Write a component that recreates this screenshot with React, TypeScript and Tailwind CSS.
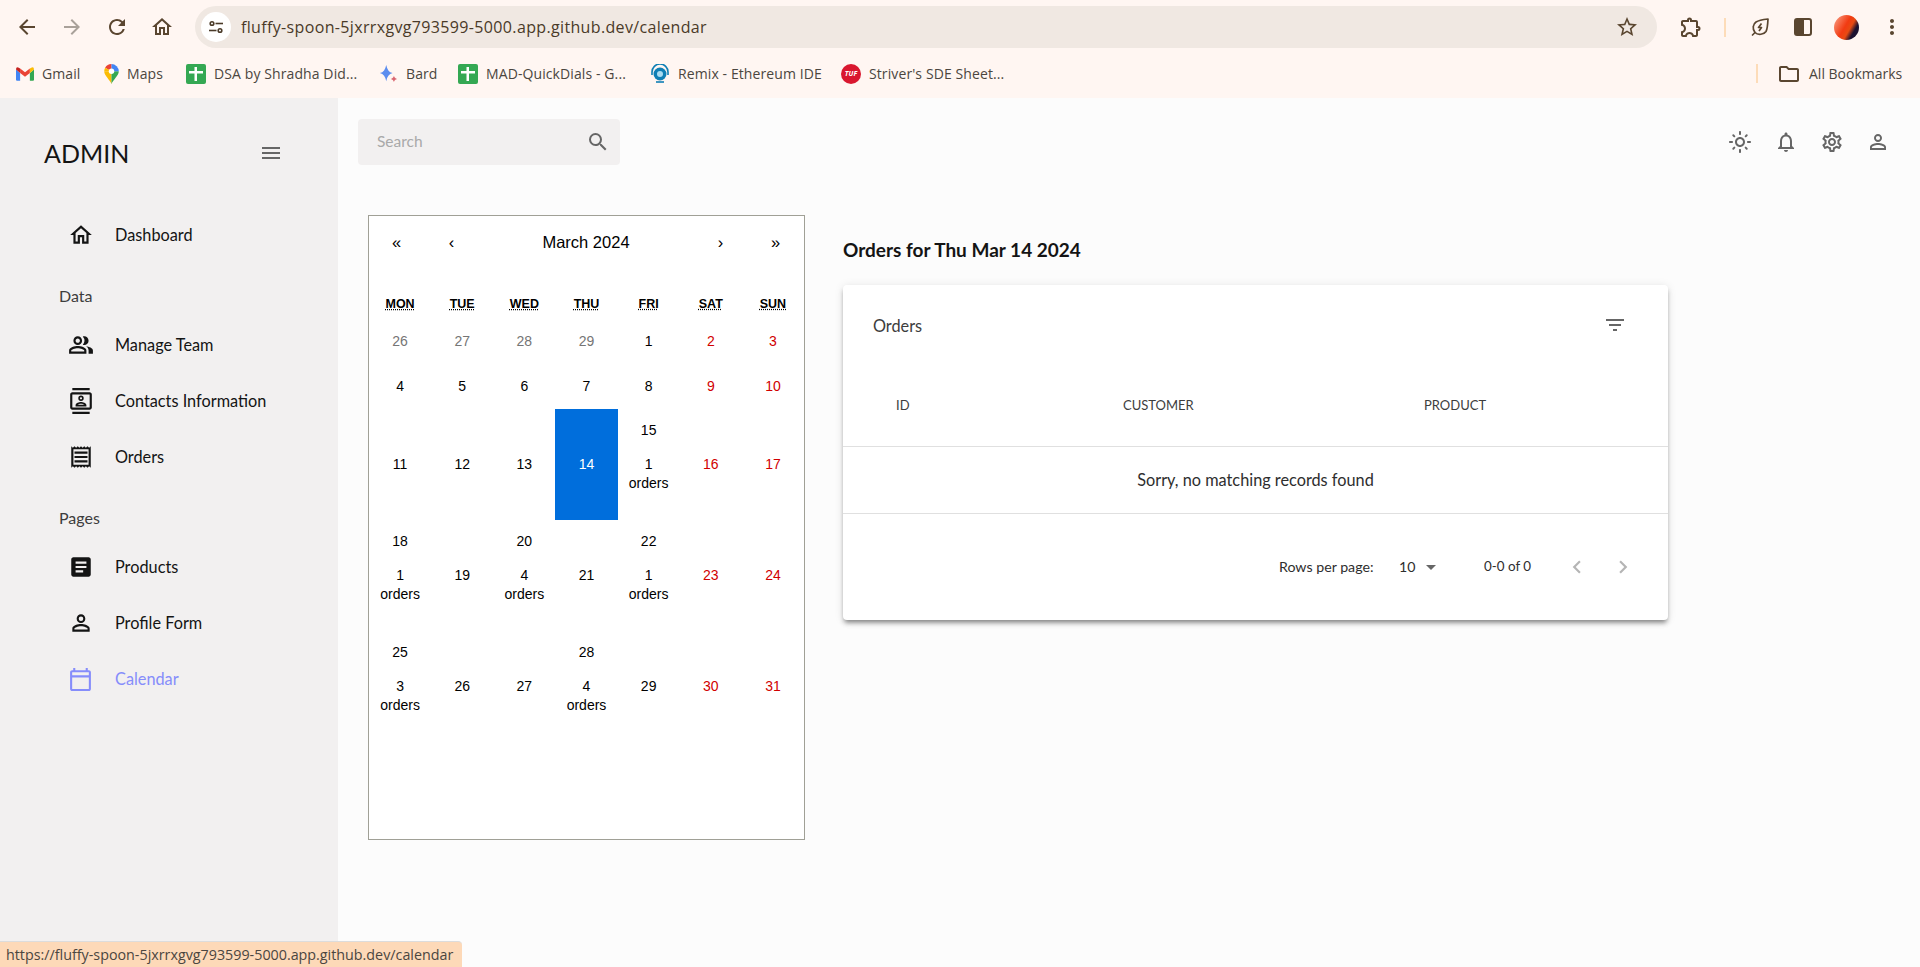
import {
  MdArrowBack,
  MdArrowDropDown,
  MdArrowForward,
  MdArticle,
  MdChevronLeft,
  MdChevronRight,
  MdFilterList,
  MdMenu,
  MdMoreVert,
  MdNotificationsNone,
  MdOutlineCalendarToday,
  MdOutlineContacts,
  MdOutlineExtension,
  MdOutlineFolder,
  MdOutlineHome,
  MdOutlineLightMode,
  MdOutlinePeopleAlt,
  MdOutlineReceipt,
  MdOutlineSettings,
  MdPersonOutline,
  MdRefresh,
  MdSearch,
  MdStarBorder,
} from "react-icons/md";
import type { ReactNode } from "react";

const GmailIcon = () => (
  <svg viewBox="0 0 24 18" className="w-[18px] h-[14px]">
    <path d="M0 3 L0 16.5 Q0 18 1.5 18 L5.5 18 L5.5 7.5 Z" fill="#4285f4" />
    <path d="M24 3 L24 16.5 Q24 18 22.5 18 L18.5 18 L18.5 7.5 Z" fill="#34a853" />
    <path d="M5.5 7.5 L12 12.5 L18.5 7.5 L18.5 1.5 L12 6.5 L5.5 1.5 Z" fill="#ea4335" />
    <path d="M0 3 Q0 -0.5 3 0.3 L5.5 1.5 L5.5 7.5 Z" fill="#c5221f" />
    <path d="M24 3 Q24 -0.5 21 0.3 L18.5 1.5 L18.5 7.5 Z" fill="#fbbc04" />
  </svg>
);

const MapsIcon = () => (
  <svg viewBox="0 0 16 22" className="w-[15px] h-[20px]">
    <path d="M8 22 C6 17 0 13 0 8 L8 8 Z" fill="#fbbc04" />
    <path d="M8 22 C10 17 16 13 16 8 L8 8 Z" fill="#34a853" />
    <path d="M1 4 A8 8 0 0 1 8 0 L8 8 Z" fill="#ea4335" />
    <path d="M8 0 A8 8 0 0 1 16 8 L8 8 Z" fill="#4285f4" />
    <path d="M0 8 A8 8 0 0 1 1 4 L8 8 Z" fill="#fbbc04" />
    <circle cx="8" cy="8" r="3" fill="#fff" />
  </svg>
);

const SheetIcon = () => (
  <svg viewBox="0 0 20 20" className="w-5 h-5">
    <rect width="20" height="20" rx="2" fill="#34a853" />
    <rect x="3" y="7" width="14" height="2.5" fill="#fff" />
    <rect x="8.5" y="3" width="2.5" height="14" fill="#fff" />
  </svg>
);

const BardIcon = () => (
  <svg viewBox="0 0 21 21" className="w-[19px] h-[19px]">
    <path d="M8 1 C9 6 11 9 15 10 C11 11 9 14 8 19 C7 14 5 11 1 10 C5 9 7 6 8 1 Z" fill="#5b8def" />
    <path d="M16.5 13 C17 15 18 16 20 16.5 C18 17 17 18 16.5 20 C16 18 15 17 13 16.5 C15 16 16 15 16.5 13 Z" fill="#d96570" />
  </svg>
);

const RemixIcon = () => (
  <svg viewBox="0 0 20 20" className="w-5 h-5">
    <circle cx="10" cy="10" r="6.5" fill="#0f7fb5" />
    <path d="M2 11 V8 A8 8 0 0 1 18 8 V11" fill="none" stroke="#0f7fb5" strokeWidth="1.6" />
    <path d="M6 18 H14" stroke="#0f7fb5" strokeWidth="1.6" />
    <circle cx="10" cy="10" r="3" fill="#a9dcf2" />
  </svg>
);

const TufIcon = () => (
  <span className="flex items-center justify-center w-5 h-5 rounded-full bg-[#d9172f] text-white text-[7px] font-bold italic leading-none">
    TUF
  </span>
);

const LeafIcon = () => (
  <svg viewBox="0 0 20 20" className="w-5 h-5" fill="none" stroke="#5a4630" strokeWidth="1.7">
    <path d="M18 2 C18 2 17.5 12 16 14.5 C14 17.5 8 18.5 5 15.5 C2 12 3 7 6 5 C9 3 18 2 18 2 Z" strokeLinejoin="round" />
    <path d="M11.5 6.5 L8.5 10.5 L11.5 10.5 L9 14" strokeLinejoin="round" />
    <path d="M5 15.5 L2.5 18" strokeLinecap="round" />
  </svg>
);

const SidePanelIcon = () => (
  <svg viewBox="0 0 18 18" className="w-[18px] h-[18px]">
    <rect x="1" y="1" width="16" height="16" rx="2" fill="none" stroke="#5a4630" strokeWidth="2" />
    <rect x="1" y="1" width="9" height="16" fill="#5a4630" />
  </svg>
);

const TuneIcon = () => (
  <svg viewBox="0 0 16 16" className="w-4 h-4" fill="none" stroke="#4a3a28" strokeWidth="1.6">
    <circle cx="4" cy="4.5" r="1.8" />
    <path d="M7.5 4.5 H15" />
    <circle cx="12" cy="11.5" r="1.8" />
    <path d="M1 11.5 H8.5" />
  </svg>
);

type BookmarkProps = { icon: ReactNode; label: string; width: string };

const Bookmark = ({ icon, label, width }: BookmarkProps) => (
  <div className={`flex items-center gap-[8px] shrink-0 ${width}`}>
    <span className="flex items-center justify-center shrink-0">{icon}</span>
    <span className="text-[14px] tracking-[0.1px] text-[#4b4640] whitespace-nowrap">{label}</span>
  </div>
);

const BrowserBar = () => (
  <div className="h-[98px] bg-[#fff6f2] font-['Open_Sans',sans-serif]">
    <div className="h-[54px] flex items-center text-[#5a4630]">
      <div className="w-[195px] flex items-center pl-[15px] gap-[21px] shrink-0">
        <MdArrowBack size={24} />
        <MdArrowForward size={24} className="text-[#a9a19a]" />
        <MdRefresh size={24} />
        <MdOutlineHome size={24} />
      </div>
      <div className="w-[1462px] h-[42px] rounded-full bg-[#f0e8e2] flex items-center pl-[6px] pr-[18px]">
        <span className="w-[30px] h-[30px] rounded-full bg-white flex items-center justify-center">
          <TuneIcon />
        </span>
        <span className="ml-[10px] text-[16px] tracking-[0.35px] text-[#4a3a28] flex-1">
          fluffy-spoon-5jxrrxgvg793599-5000.app.github.dev/calendar
        </span>
        <MdStarBorder size={24} />
      </div>
      <div className="flex items-center flex-1 pl-[22px]">
        <MdOutlineExtension size={24} />
        <span className="w-[2px] h-[19px] bg-[#fddcb9] ml-[21px] mr-[24px]" />
        <LeafIcon />
        <span className="ml-[24px]">
          <SidePanelIcon />
        </span>
        <span className="ml-[22px] w-[25px] h-[25px] rounded-full bg-[linear-gradient(120deg,#f9a58c_0%,#f23b12_45%,#e84a12_60%,#1c1230_75%)]" />
        <MdMoreVert size={24} className="ml-[21px]" />
      </div>
    </div>
    <div className="h-[39px] flex items-center pl-[16px]">
      <Bookmark icon={<GmailIcon />} label="Gmail" width="w-[88px]" />
      <Bookmark icon={<MapsIcon />} label="Maps" width="w-[82px]" />
      <Bookmark icon={<SheetIcon />} label="DSA by Shradha Did..." width="w-[193px]" />
      <Bookmark icon={<BardIcon />} label="Bard" width="w-[79px]" />
      <Bookmark icon={<SheetIcon />} label="MAD-QuickDials - G..." width="w-[192px]" />
      <Bookmark icon={<RemixIcon />} label="Remix - Ethereum IDE" width="w-[191px]" />
      <Bookmark icon={<TufIcon />} label="Striver's SDE Sheet..." width="w-[200px]" />
      <span className="ml-[715px] w-[2px] h-[19px] bg-[#fddcb9]" />
      <span className="ml-[19px] text-[#5a4630]">
        <MdOutlineFolder size={24} />
      </span>
      <span className="ml-[8px] text-[14px] text-[#4b4640] whitespace-nowrap">All Bookmarks</span>
    </div>
  </div>
);

type NavItemProps = { icon: ReactNode; label: string; active?: boolean };

const NavItem = ({ icon, label, active }: NavItemProps) => (
  <div className={`h-[56px] flex items-center pl-[68px] ${active ? "text-[#868dfb]" : "text-[#141414]"}`}>
    <span className="w-[47px] shrink-0 flex items-center">{icon}</span>
    <span className="text-[16.3px]">{label}</span>
  </div>
);

const SectionLabel = ({ label }: { label: string }) => (
  <div className="h-[24px] mt-[21px] mb-[9px] pl-[59px] text-[16px] leading-[24px] text-[#3d3d3d]">{label}</div>
);

const Sidebar = () => (
  <aside className="w-[338px] shrink-0 bg-[#f2f0f0] pt-[27px]">
    <div className="h-[56px] flex items-center justify-between pl-[44px] pr-[55px]">
      <span className="text-[25px] text-[#141414] leading-none">ADMIN</span>
      <MdMenu size={24} className="text-[#666666]" />
    </div>
    <div className="mt-[26px]">
      <NavItem icon={<MdOutlineHome size={26} />} label="Dashboard" />
    </div>
    <SectionLabel label="Data" />
    <NavItem icon={<MdOutlinePeopleAlt size={26} />} label="Manage Team" />
    <NavItem icon={<MdOutlineContacts size={26} />} label="Contacts Information" />
    <NavItem icon={<MdOutlineReceipt size={26} />} label="Orders" />
    <SectionLabel label="Pages" />
    <NavItem icon={<MdArticle size={26} />} label="Products" />
    <NavItem icon={<MdPersonOutline size={26} />} label="Profile Form" />
    <NavItem icon={<MdOutlineCalendarToday size={25} />} label="Calendar" active />
  </aside>
);

const TopBar = () => (
  <div className="flex items-start justify-between pt-[21px] pl-[20px] pr-[19px]">
    <div className="w-[262px] h-[46px] rounded-[4px] bg-[#f2f0f0] flex items-center justify-between pl-[19px] pr-[10px]">
      <span className="text-[15.5px] text-[#a9a9a9]">Search</span>
      <MdSearch size={24} className="text-[#666666]" />
    </div>
    <div className="flex items-center h-[46px] text-[#666666]">
      {[MdOutlineLightMode, MdNotificationsNone, MdOutlineSettings, MdPersonOutline].map((Icon, i) => (
        <span key={i} className="w-[46px] flex justify-center">
          <Icon size={24} />
        </span>
      ))}
    </div>
  </div>
);

type Tile = { day: number; orders?: number; other?: boolean };

const weeks: { tall: boolean; tiles: Tile[] }[] = [
  {
    tall: false,
    tiles: [
      { day: 26, other: true },
      { day: 27, other: true },
      { day: 28, other: true },
      { day: 29, other: true },
      { day: 1 },
      { day: 2 },
      { day: 3 },
    ],
  },
  { tall: false, tiles: [{ day: 4 }, { day: 5 }, { day: 6 }, { day: 7 }, { day: 8 }, { day: 9 }, { day: 10 }] },
  {
    tall: true,
    tiles: [{ day: 11 }, { day: 12 }, { day: 13 }, { day: 14 }, { day: 15, orders: 1 }, { day: 16 }, { day: 17 }],
  },
  {
    tall: true,
    tiles: [
      { day: 18, orders: 1 },
      { day: 19 },
      { day: 20, orders: 4 },
      { day: 21 },
      { day: 22, orders: 1 },
      { day: 23 },
      { day: 24 },
    ],
  },
  {
    tall: true,
    tiles: [
      { day: 25, orders: 3 },
      { day: 26 },
      { day: 27 },
      { day: 28, orders: 4 },
      { day: 29 },
      { day: 30 },
      { day: 31 },
    ],
  },
];

const CalendarTile = ({ tile, col, tall }: { tile: Tile; col: number; tall: boolean }) => {
  const selected = tile.day === 14;
  const weekend = col >= 5;
  const color = selected
    ? "bg-[#006edc] text-white"
    : tile.other
      ? "text-[#757575]"
      : weekend
        ? "text-[#d10000]"
        : "text-black";

  if (!tall) {
    return <div className={`flex items-center justify-center ${color}`}>{tile.day}</div>;
  }
  return (
    <div className={`flex flex-col items-center ${color}`}>
      <div className="h-[43px] flex items-center">{tile.orders ? tile.day : ""}</div>
      <div className="h-[24px] flex items-center">{tile.orders ?? tile.day}</div>
      {tile.orders ? <div className="leading-[16px] -mt-[1px]">orders</div> : null}
    </div>
  );
};

const Calendar = () => (
  <div className="w-[437px] h-[625px] shrink-0 border border-[#a0a096] bg-white font-['Liberation_Sans',sans-serif] text-[14px]">
    <div className="h-[53px] flex items-center text-[16.5px] text-black">
      <span className="w-[55px] text-center">«</span>
      <span className="w-[55px] text-center">‹</span>
      <span className="w-[214px] text-center">March 2024</span>
      <span className="w-[55px] text-center">›</span>
      <span className="w-[55px] text-center">»</span>
    </div>
    <div className="grid grid-cols-7 mt-[17px] h-[33px] items-start pt-[9px] text-[12.5px] font-bold text-center text-black">
      {["MON", "TUE", "WED", "THU", "FRI", "SAT", "SUN"].map((d) => (
        <span key={d}>
          <span className="underline decoration-dotted">{d}</span>
        </span>
      ))}
    </div>
    {weeks.map((week, i) => (
      <div key={i} className={`grid grid-cols-7 text-center ${week.tall ? "h-[111px]" : "h-[45px]"}`}>
        {week.tiles.map((tile, col) => (
          <CalendarTile key={col} tile={tile} col={col} tall={week.tall} />
        ))}
      </div>
    ))}
  </div>
);

const OrdersTable = () => (
  <div className="w-[825px] shrink-0">
    <h2 className="pt-[20px] pb-[20px] text-[19px] leading-[30px] font-bold text-[#141414]">
      Orders for Thu Mar 14 2024
    </h2>
    <div className="h-[335px] rounded-[4px] bg-white shadow-[0_4px_4px_-2px_rgba(0,0,0,0.35),0_4px_5px_0_rgba(0,0,0,0.14),0_1px_10px_0_rgba(0,0,0,0.1)]">
      <div className="h-[80px] flex items-center justify-between pl-[30px] pr-[41px] text-[#3d3d3d]">
        <span className="text-[16.3px] pt-[2px]">Orders</span>
        <MdFilterList size={24} className="text-[#666666]" />
      </div>
      <div className="h-[82px] flex items-center pl-[53px] border-b border-[#e0e0e0] text-[13px] text-[#3d3d3d]">
        <span className="w-[227px]">ID</span>
        <span className="w-[301px]">CUSTOMER</span>
        <span>PRODUCT</span>
      </div>
      <div className="h-[67px] flex items-center justify-center border-b border-[#e0e0e0] text-[16.3px] text-[#2e2e2e]">
        Sorry, no matching records found
      </div>
      <div className="h-[105px] flex items-center pl-[436px] text-[14.2px] text-[#2e2e2e]">
        <span className="w-[120px]">Rows per page:</span>
        <span className="w-[20px]">10</span>
        <MdArrowDropDown size={24} className="text-[#666666]" />
        <span className="ml-[41px] w-[70px] text-[13.4px]">0-0 of 0</span>
        <MdChevronLeft size={26} className="ml-[10px] text-[#b5b5b5]" />
        <MdChevronRight size={26} className="ml-[20px] text-[#b5b5b5]" />
      </div>
    </div>
  </div>
);

export default function App() {
  return (
    <div className="relative w-[1920px] h-[967px] overflow-hidden flex flex-col bg-[#fcfcfc] font-['Lato',sans-serif]">
      <BrowserBar />
      <div className="flex flex-1 min-h-0">
        <Sidebar />
        <main className="flex-1">
          <TopBar />
          <div className="flex items-start gap-[38px] mt-[50px] pl-[30px]">
            <Calendar />
            <OrdersTable />
          </div>
        </main>
      </div>
      <div className="absolute left-0 bottom-0 w-[462px] h-[26px] rounded-tr-[4px] bg-[#fdd9b8] border-t border-[#dcdcdc] pl-[6px] text-[14.3px] leading-[25px] text-[#4b4640] font-['Open_Sans',sans-serif] whitespace-nowrap">
        https://fluffy-spoon-5jxrrxgvg793599-5000.app.github.dev/calendar
      </div>
    </div>
  );
}
